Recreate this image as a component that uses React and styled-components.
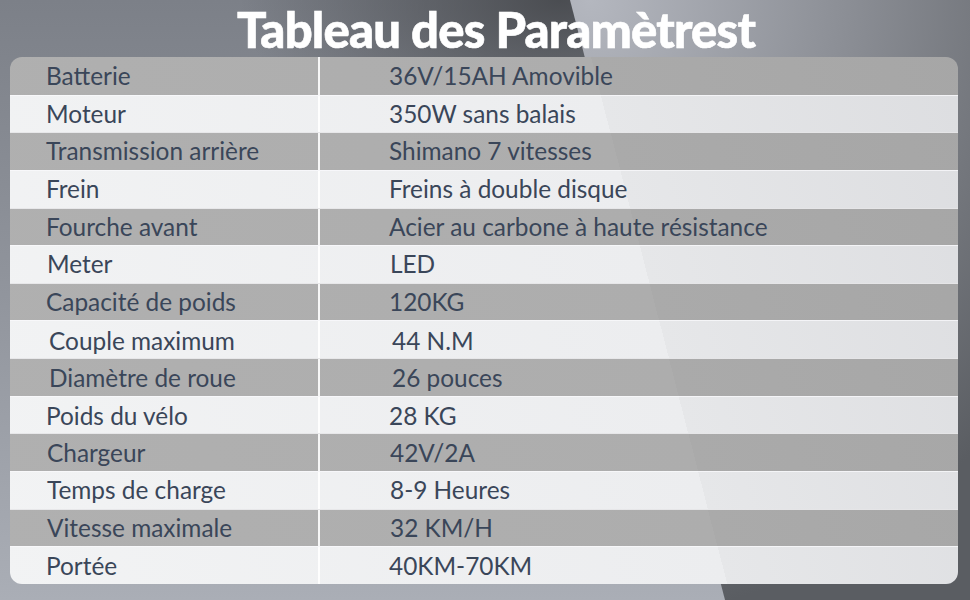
import React from 'react';
import styled, { createGlobalStyle } from 'styled-components';

const GlobalStyle = createGlobalStyle`
  html, body {
    margin: 0;
    padding: 0;
  }
  body {
    font-family: Lato, "Noto Sans", sans-serif;
  }
`;

const Page = styled.div`
  position: relative;
  width: 970px;
  height: 600px;
  overflow: hidden;
  display: flex;
  flex-direction: column;
  padding: 0 12px 16px 10px;
  box-sizing: border-box;
  background:
    radial-gradient(ellipse 320px 170px at 560px 0px, rgba(66, 68, 72, 0.85), rgba(66, 68, 72, 0) 100%),
    linear-gradient(180deg, #7c8088 0%, #8f939b 45%, #aaaeb6 100%);

  &::before {
    content: '';
    position: absolute;
    inset: 0;
    clip-path: polygon(570px 0, 970px 0, 970px 600px, 725px 600px);
    background: radial-gradient(ellipse 560px 620px at 590px 0px, #b4b7bf 0%, #8c8f96 45%, #5a5d62 100%);
  }
`;

const Title = styled.h1`
  position: relative;
  z-index: 1;
  margin: 0;
  height: 57px;
  display: flex;
  align-items: center;
  justify-content: center;
  padding: 2px 0 0 24px;
  box-sizing: border-box;
  color: #ffffff;
  font-family: Lato, "Noto Sans", sans-serif;
  font-weight: 900;
  font-size: 49px;
  letter-spacing: -0.8px;
  line-height: 1;
  -webkit-text-stroke: 0.6px #ffffff;
`;

const Table = styled.div`
  position: relative;
  z-index: 1;
  height: 527px;
  display: grid;
  grid-auto-rows: 1fr;
  border-radius: 12px;
  overflow: hidden;
`;

const Row = styled.div`
  display: grid;
  grid-template-columns: 308px 1fr;
  border-top: ${p => (p.$first ? 'none' : '1px solid rgba(250, 250, 252, 0.75)')};
  background: ${p =>
    p.$shade
      ? 'linear-gradient(75.5deg, #b0b0b0 0%, #adadad 65%, #aaaaaa 65%, #a6a6a6 100%)'
      : 'linear-gradient(75.5deg, #f2f3f4 0%, #ecedef 65%, #e6e7e9 65%, #dcdde0 100%)'};
  background-attachment: fixed;
`;

const Cell = styled.div`
  display: flex;
  align-items: center;
  padding-left: ${p => p.$pad}px;
  color: #3a4659;
  font-size: 24.4px;
  line-height: 1;
  white-space: nowrap;
`;

const Value = styled(Cell)`
  border-left: 2px solid rgba(255, 255, 255, 0.9);
`;

const specs = [
  { label: 'Batterie', value: '36V/15AH Amovible' },
  { label: 'Moteur', value: '350W sans balais' },
  { label: 'Transmission arrière', value: 'Shimano 7 vitesses' },
  { label: 'Frein', value: 'Freins à double disque' },
  { label: 'Fourche avant', value: 'Acier au carbone à haute résistance' },
  { label: 'Meter', value: 'LED', shift: 1 },
  { label: 'Capacité de poids', value: '120KG' },
  { label: 'Couple maximum', value: '44 N.M', shift: 3, vshift: 3 },
  { label: 'Diamètre de roue', value: '26 pouces', shift: 3, vshift: 2 },
  { label: 'Poids du vélo', value: '28 KG', vshift: 2 },
  { label: 'Chargeur', value: '42V/2A', shift: 1, vshift: 1 },
  { label: 'Temps de charge', value: '8-9 Heures', shift: 1 },
  { label: 'Vitesse maximale', value: '32 KM/H', shift: 1 },
  { label: 'Portée', value: '40KM-70KM', vshift: 2 },
];

export default function App() {
  return (
    <>
      <GlobalStyle />
      <Page>
        <Title>Tableau des Paramètrest</Title>
        <Table>
          {specs.map((s, i) => (
            <Row key={s.label} $first={i === 0} $shade={i % 2 === 0}>
              <Cell $pad={36 + (s.shift || 0)} style={s.vshift ? { paddingTop: s.vshift } : undefined}>
                {s.label}
              </Cell>
              <Value $pad={69 + (s.shift || 0)} style={s.vshift ? { paddingTop: s.vshift } : undefined}>
                {s.value}
              </Value>
            </Row>
          ))}
        </Table>
      </Page>
    </>
  );
}
